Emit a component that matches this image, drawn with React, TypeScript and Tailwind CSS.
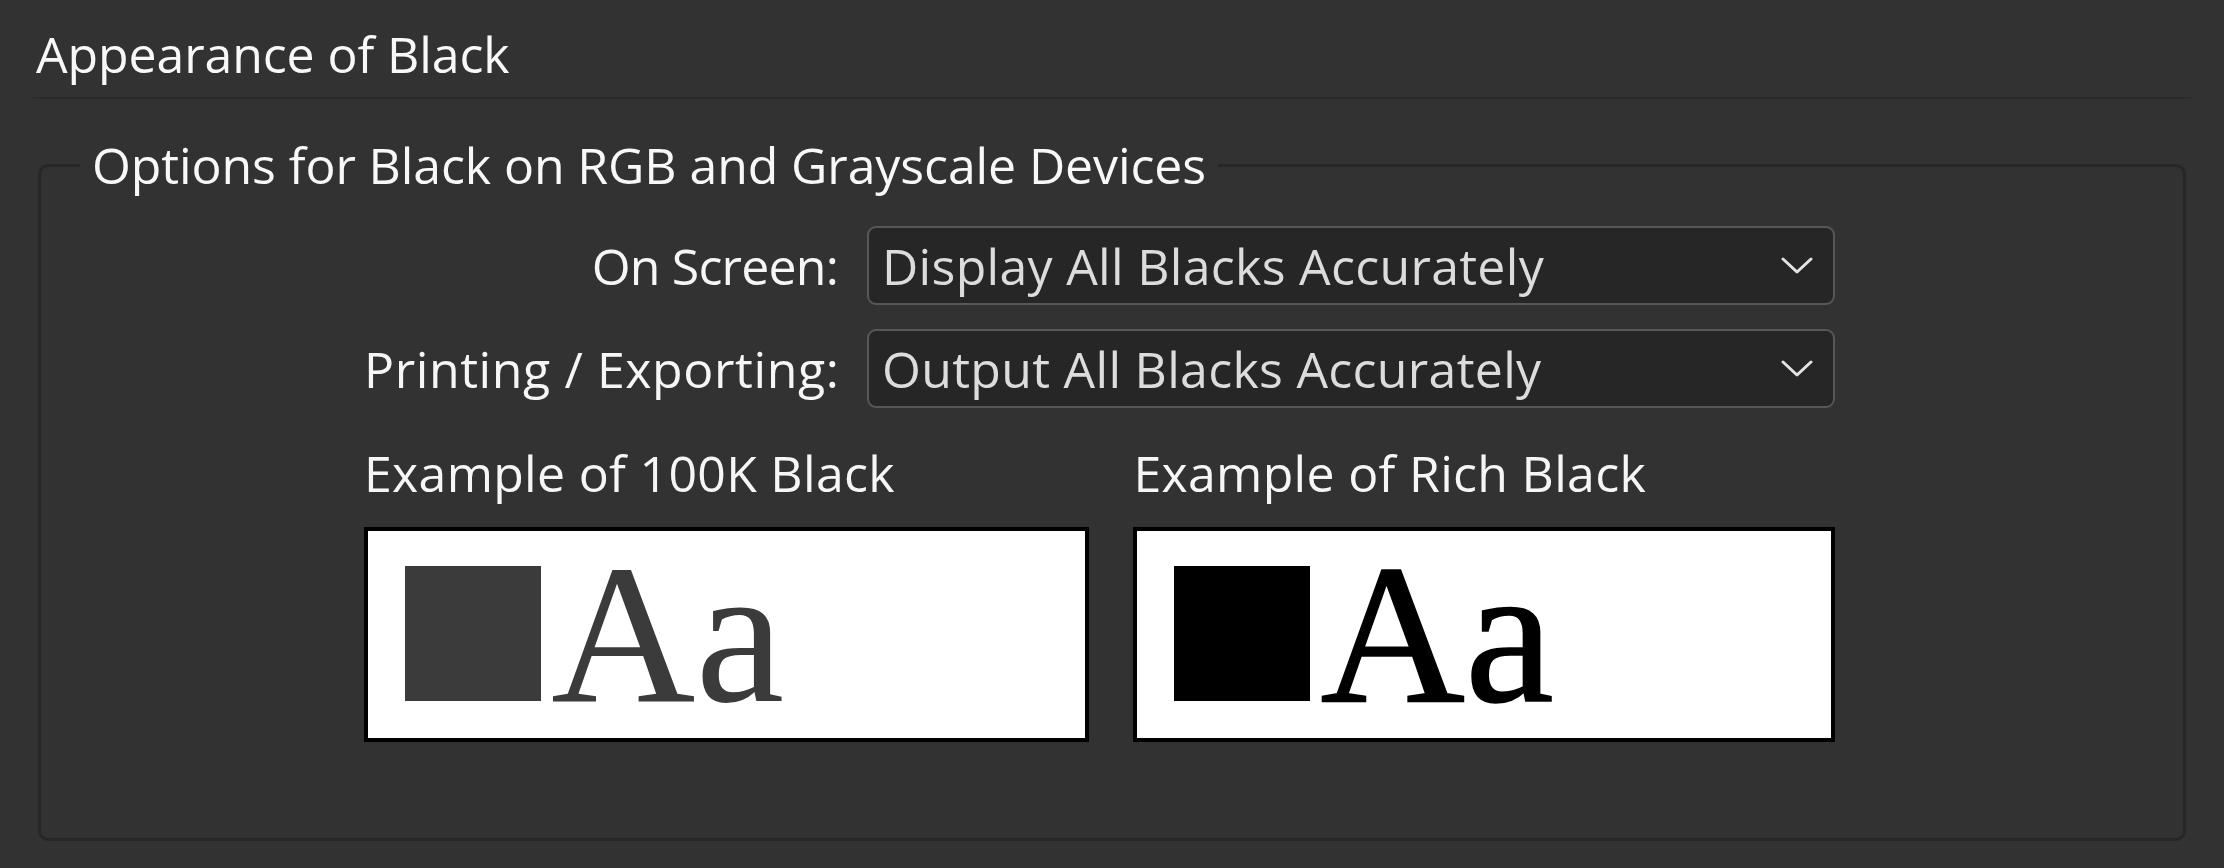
import React from "react";

const ui = { fontFamily: '"Open Sans", "Liberation Sans", sans-serif' };
const serif = { fontFamily: '"Liberation Serif", "Times New Roman", serif' };

const Chevron: React.FC = () => (
  <svg width="32" height="18" viewBox="0 0 32 18" fill="none">
    <polyline points="2,2 16,15 30,2" stroke="#e4e4e4" strokeWidth="3" strokeLinecap="round" strokeLinejoin="round" />
  </svg>
);

const Select: React.FC<{ value: string }> = ({ value }) => (
  <div className="flex h-[79px] items-center justify-between rounded-[9px] border-2 border-[#575757] bg-[#262626] pl-[13px] pr-[20px]">
    <span className="whitespace-nowrap text-[50px] leading-[60px] tracking-[0.3px] text-[#dcdcdc]">{value}</span>
    <Chevron />
  </div>
);

const Sample: React.FC<{ label: string; swatch: string; text: string; width: string }> = ({ label, swatch, text, width }) => (
  <div className={width}>
    <div className="whitespace-nowrap text-[50px] leading-[60px] tracking-[0.3px] text-[#f6f6f6]">{label}</div>
    <div className="mt-[24px] h-[215px] border-4 border-black bg-white pl-[37px] pt-[3px]">
      <div className="flex items-baseline">
        <div className={`h-[135px] w-[136px] ${swatch}`} />
        <span className={`ml-[10px] text-[200px] font-normal leading-none tracking-normal ${text}`} style={serif}>
          Aa
        </span>
      </div>
    </div>
  </div>
);

export default function App() {
  return (
    <div className="h-[868px] w-full overflow-hidden bg-[#323232] px-[33px] pt-[24px] font-medium" style={ui}>
      <div className="whitespace-nowrap pl-[3px] text-[50px] leading-[60px] tracking-[-0.1px] text-[#f8f8f8]">
        Appearance of Black
      </div>
      <div className="mt-[13px] h-[2px] bg-[#2b2b2b]" />

      <fieldset className="mx-[5px] mt-[36px] rounded-[10px] border-[3px] border-[#272727] pb-[96px]">
        <legend className="ml-[39px] whitespace-nowrap px-[12px] text-[50px] leading-[60px] tracking-[-0.1px] text-[#f8f8f8]">
          Options for Black on RGB and Grayscale Devices
        </legend>

        <div className="ml-[323px] mt-[31px] w-[1471px]">
          <div className="grid grid-cols-[474px_968px] items-center gap-x-[29px] gap-y-[24px]">
            <div className="whitespace-nowrap text-right text-[50px] leading-[60px] tracking-[-0.8px] text-[#f6f6f6]">
              On Screen:
            </div>
            <Select value="Display All Blacks Accurately" />
            <div className="whitespace-nowrap text-right text-[50px] leading-[60px] tracking-[0.6px] text-[#f6f6f6]">
              Printing / Exporting:
            </div>
            <Select value="Output All Blacks Accurately" />
          </div>

          <div className="mt-[35px] flex gap-x-[44px]">
            <Sample label="Example of 100K Black" swatch="bg-[#3b3b3b]" text="text-[#3b3b3b]" width="w-[726px]" />
            <Sample
              label="Example of Rich Black"
              swatch="bg-black"
              text="text-black [-webkit-text-stroke:1.5px_#000]"
              width="w-[702px]"
            />
          </div>
        </div>
      </fieldset>
    </div>
  );
}
